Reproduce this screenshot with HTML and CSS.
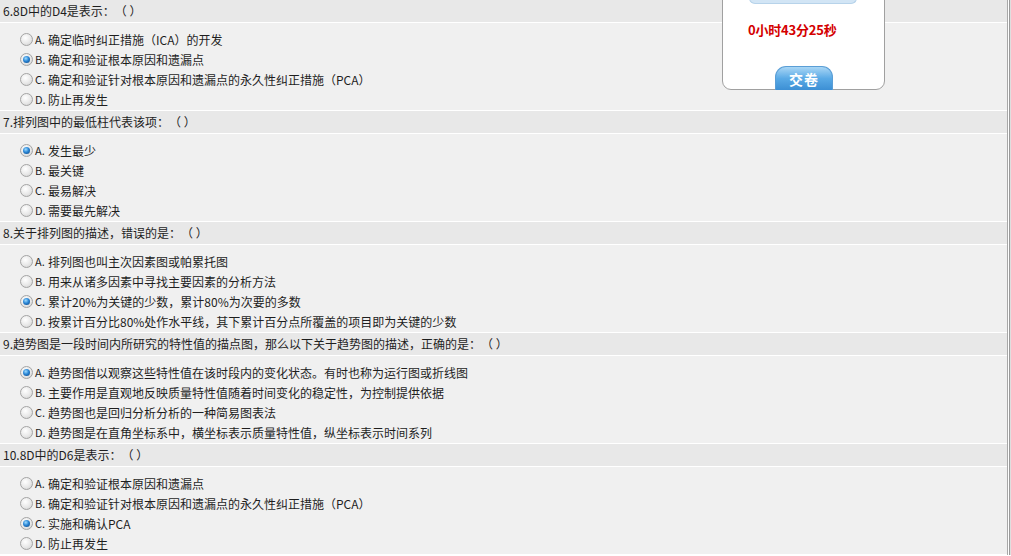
FILE: index.html
```html
<!DOCTYPE html>
<html lang="zh-CN">
<head>
  <meta charset="UTF-8">
  <title>在线考试</title>
  <link rel="stylesheet" href="styles.css">
</head>
<body>
  <div class="page">
    <!-- 第6题 -->
    <div class="question first">
      <div class="q-title">6.8D中的D4是表示：（ ）</div>
      <ul class="q-options">
        <li><span class="radio"></span><span class="key">A.</span>确定临时纠正措施（ICA）的开发</li>
        <li><span class="radio on"></span><span class="key">B.</span>确定和验证根本原因和遗漏点</li>
        <li><span class="radio"></span><span class="key">C.</span>确定和验证针对根本原因和遗漏点的永久性纠正措施（PCA）</li>
        <li><span class="radio"></span><span class="key">D.</span>防止再发生</li>
      </ul>
    </div>
    <!-- 第7题 -->
    <div class="question">
      <div class="q-title">7.排列图中的最低柱代表该项：（ ）</div>
      <ul class="q-options">
        <li><span class="radio on"></span><span class="key">A.</span>发生最少</li>
        <li><span class="radio"></span><span class="key">B.</span>最关键</li>
        <li><span class="radio"></span><span class="key">C.</span>最易解决</li>
        <li><span class="radio"></span><span class="key">D.</span>需要最先解决</li>
      </ul>
    </div>
    <!-- 第8题 -->
    <div class="question">
      <div class="q-title">8.关于排列图的描述，错误的是：（ ）</div>
      <ul class="q-options">
        <li><span class="radio"></span><span class="key">A.</span>排列图也叫主次因素图或帕累托图</li>
        <li><span class="radio"></span><span class="key">B.</span>用来从诸多因素中寻找主要因素的分析方法</li>
        <li><span class="radio on"></span><span class="key">C.</span>累计20%为关键的少数，累计80%为次要的多数</li>
        <li><span class="radio"></span><span class="key">D.</span>按累计百分比80%处作水平线，其下累计百分点所覆盖的项目即为关键的少数</li>
      </ul>
    </div>
    <!-- 第9题 -->
    <div class="question">
      <div class="q-title">9.趋势图是一段时间内所研究的特性值的描点图，那么以下关于趋势图的描述，正确的是：（ ）</div>
      <ul class="q-options">
        <li><span class="radio on"></span><span class="key">A.</span>趋势图借以观察这些特性值在该时段内的变化状态。有时也称为运行图或折线图</li>
        <li><span class="radio"></span><span class="key">B.</span>主要作用是直观地反映质量特性值随着时间变化的稳定性，为控制提供依据</li>
        <li><span class="radio"></span><span class="key">C.</span>趋势图也是回归分析分析的一种简易图表法</li>
        <li><span class="radio"></span><span class="key">D.</span>趋势图是在直角坐标系中，横坐标表示质量特性值，纵坐标表示时间系列</li>
      </ul>
    </div>
    <!-- 第10题 -->
    <div class="question">
      <div class="q-title">10.8D中的D6是表示：（ ）</div>
      <ul class="q-options">
        <li><span class="radio"></span><span class="key">A.</span>确定和验证根本原因和遗漏点</li>
        <li><span class="radio"></span><span class="key">B.</span>确定和验证针对根本原因和遗漏点的永久性纠正措施（PCA）</li>
        <li><span class="radio on"></span><span class="key">C.</span>实施和确认PCA</li>
        <li><span class="radio"></span><span class="key">D.</span>防止再发生</li>
      </ul>
    </div>
  </div>

  <!-- 倒计时浮动框 -->
  <div class="timer-box">
    <div class="timer-tab"></div>
    <div class="timer-text">0小时43分25秒</div>
    <button class="submit-btn">交卷</button>
  </div>
</body>
</html>
```

FILE: styles.css
```css
body {
  margin: 0;
  background: #fff;
  font-family: "Noto Sans CJK SC", "Noto Sans", sans-serif;
  font-size: 12px;
  color: #1e1e1e;
  text-spacing-trim: space-all;
  overflow: hidden;
}
.page {
  width: 1007px;
  border-right: 1px solid #a8a8a8;
  box-shadow: 1px 0 0 #fff, 2px 0 0 #9a9a9a, 3px 0 0 #dedede;
  min-height: 556px;
  background: #fff;
}
.question {
  border-top: 1px solid #fff;
}
.question.first {
  margin-top: -1px;
}
/* 题目标题行 */
.q-title {
  height: 22px;
  line-height: 22px;
  padding-left: 3px;
  background: #e8e8e8;
  border-bottom: 1px solid #fff;
  white-space: nowrap;
}
/* 选项区 */
.q-options {
  list-style: none;
  margin: 0;
  padding: 6px 0 1px 20px;
  background: #f0f0f0;
}
.q-options li {
  display: flex;
  align-items: center;
  height: 20px;
  white-space: nowrap;
}
.key {
  display: inline-block;
  width: 13px;
  font-size: 11px;
}
.radio {
  position: relative;
  width: 13px;
  height: 13px;
  box-sizing: border-box;
  margin-right: 2px;
  border-radius: 50%;
  border: 1px solid #a4a4a4;
  background: radial-gradient(circle at 40% 35%, #ffffff 0%, #e8e8e8 55%, #cccccc 100%);
}
.radio.on::after {
  content: "";
  position: absolute;
  left: 2px;
  top: 2px;
  width: 7px;
  height: 7px;
  border-radius: 50%;
  background: radial-gradient(circle at 40% 35%, #9fdcff 0%, #2a86d6 45%, #0c3f78 100%);
}
/* 倒计时框 */
.timer-box {
  position: absolute;
  left: 722px;
  top: -12px;
  width: 161px;
  height: 100px;
  background: #fff;
  border: 1px solid #a0a0a0;
  border-radius: 0 0 9px 9px;
}
.timer-tab {
  position: absolute;
  left: 26px;
  top: 9px;
  width: 106px;
  height: 5px;
  background: #d2e5f5;
  border: 1px solid #b7d3ea;
  border-top: none;
  border-radius: 0 0 10px 10px;
}
.timer-text {
  position: absolute;
  left: 25px;
  top: 33px;
  font-size: 13px;
  font-weight: 700;
  line-height: 16px;
  color: #d40000;
  letter-spacing: -0.2px;
}
.submit-btn {
  position: absolute;
  left: 52px;
  bottom: -1px;
  width: 58px;
  height: 24px;
  padding: 0;
  border: 1px solid #5a9ed6;
  border-bottom: none;
  border-radius: 11px 11px 0 0;
  background: linear-gradient(#a9d6f5, #5aaae6 50%, #3c8fd4);
  color: #fff;
  font-family: inherit;
  font-size: 14px;
  font-weight: 700;
  letter-spacing: 1px;
  cursor: pointer;
}
```
